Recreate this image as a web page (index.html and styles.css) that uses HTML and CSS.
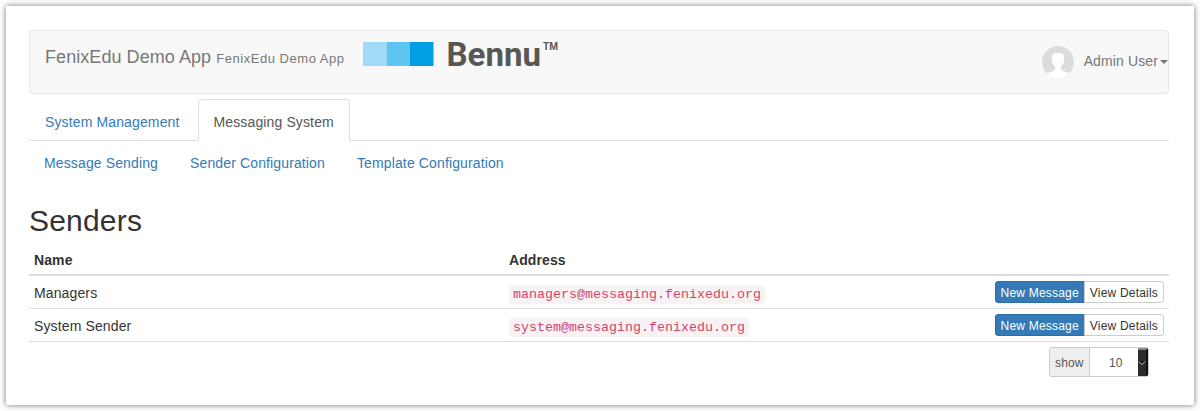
FILE: index.html
```html
<!DOCTYPE html>
<html lang="en">
<head>
<meta charset="utf-8">
<title>Senders</title>
<link rel="stylesheet" href="styles.css">
</head>
<body>
<main class="window">
  <header class="navbar">
    <div class="brand">FenixEdu Demo App <small>FenixEdu Demo App</small></div>
    <svg class="logo" width="200" height="48" viewBox="0 -6 200 48">
      <rect x="0" y="5" width="23.500" height="24" fill="#a1daf8"/>
      <rect x="23.500" y="5" width="23.500" height="24" fill="#5ec5f2"/>
      <rect x="47" y="5" width="23.500" height="24" fill="#009fe3"/>
      <text class="logo-name" x="83.500" y="29" textLength="94.500" lengthAdjust="spacingAndGlyphs">Bennu</text>
      <text class="logo-mark" x="180" y="12.500" textLength="15" lengthAdjust="spacingAndGlyphs">TM</text>
    </svg>
    <div class="user">
      <svg class="avatar" width="32" height="32" viewBox="0 0 32 32">
        <clipPath id="round"><circle cx="16" cy="16" r="16"/></clipPath>
        <g clip-path="url(#round)">
          <rect width="32" height="32" fill="#dcdcdc"/>
          <path d="M11 8Q13 7 16 7T21 8Q22.500 10 22 13Q22.500 14 21.800 17L20.500 18Q20 20 19 21V23Q20 25 23 26L27 27Q30 29 30 32H2Q2 29 5 27L9 26Q12 25 13 23V21Q12 20 11.500 18L10.200 17Q9.500 14 10 13Q9.500 10 11 8Z" fill="#fff"/>
        </g>
      </svg>
      <span class="user-name">Admin User</span><span class="caret"></span>
    </div>
  </header>
  <nav class="tabs">
    <a class="tab">System Management</a>
    <a class="tab active">Messaging System</a>
  </nav>
  <nav class="pills">
    <a class="pill">Message Sending</a>
    <a class="pill">Sender Configuration</a>
    <a class="pill">Template Configuration</a>
  </nav>
  <h2 class="title">Senders</h2>
  <section class="table">
    <div class="row head"><div>Name</div><div>Address</div><div></div></div>
    <div class="row">
      <div>Managers</div>
      <div><code class="address">managers@messaging.fenixedu.org</code></div>
      <div class="buttons"><a class="btn primary">New Message</a><a class="btn">View Details</a></div>
    </div>
    <div class="row">
      <div>System Sender</div>
      <div><code class="address">system@messaging.fenixedu.org</code></div>
      <div class="buttons"><a class="btn primary">New Message</a><a class="btn">View Details</a></div>
    </div>
  </section>
  <div class="pager">
    <span class="addon">show</span>
    <span class="value">10</span>
    <span class="arrow"><svg width="8" height="6" viewBox="0 0 8 6"><path d="M1 1.500L4 4.500L7 1.500" fill="#000" stroke="#ddd"/></svg></span>
  </div>
</main>
</body>
</html>
```
FILE: styles.css
```css
* { box-sizing: border-box; }
body {
  margin: 0;
  padding: 6px;
  height: 411px;
  overflow: hidden;
  background: #fff;
  font: 14px/20px "Liberation Sans", Arial, sans-serif;
  letter-spacing: .13px;
  color: #333;
}
.window {
  height: 399px;
  padding: 24px 25px 0 23px;
  background: #fff;
  box-shadow: 0 0 6px rgba(0, 0, 0, .55);
}
.navbar {
  display: flex;
  align-items: flex-start;
  height: 64px;
  padding: 0 0 0 15px;
  background: #f8f8f8;
  border: 1px solid #e7e7e7;
  border-radius: 4px;
  color: #777;
}
.brand {
  width: 318px;
  padding-top: 16px;
  font-size: 18px;
  letter-spacing: .06px;
  white-space: nowrap;
}
.brand small { font-size: 13px; letter-spacing: .54px; }
.logo { letter-spacing: 0; }
.logo-name { font: bold 33.700px Roboto, sans-serif; fill: #575756; }
.logo-mark { font: bold 11px Roboto, sans-serif; fill: #575756; }
.user {
  display: flex;
  align-items: center;
  margin-left: auto;
  padding-top: 15px;
}
.avatar { margin-right: 10px; }
.user-name { position: relative; top: -1px; letter-spacing: .12px; }
.caret {
  margin-left: 2px;
  border-top: 4px solid #777;
  border-left: 4px solid transparent;
  border-right: 4px solid transparent;
}
.tabs {
  display: flex;
  gap: 2px;
  height: 42px;
  margin-top: 5px;
  border-bottom: 1px solid #ddd;
}
.tab {
  height: 42px;
  padding: 12px 15px 0;
  border: 1px solid transparent;
  color: #337ab7;
}
.tab.active {
  background: #fff;
  border-color: #ddd #ddd #fff;
  border-radius: 4px 4px 0 0;
  color: #555;
}
.pills { display: flex; gap: 2px; margin-top: 2px; }
.pill { padding: 10px 15px; color: #337ab7; }
.title {
  margin: 21px 0 8px;
  font-size: 30px;
  line-height: 33px;
  font-weight: 400;
  letter-spacing: .2px;
}
.row {
  display: grid;
  grid-template-columns: 475px 396px 1fr;
  height: 33px;
  padding-top: 7px;
  border-bottom: 1px solid #ddd;
}
.row > div { padding: 0 5px; }
.row.head {
  height: 31px;
  padding-top: 5px;
  border-bottom-width: 2px;
  font-weight: 700;
  letter-spacing: .1px;
}
.address {
  display: inline-block;
  padding: 2px 4px;
  border-radius: 4px;
  background: #f9f2f4;
  color: #d2456a;
  font: 13.300px/15px "Liberation Mono", monospace;
  letter-spacing: .02px;
}
.row > .buttons {
  display: flex;
  justify-content: flex-end;
  margin-top: -2px;
}
.btn {
  height: 22px;
  padding: 2px 5px;
  border: 1px solid #ccc;
  border-radius: 0 3px 3px 0;
  font-size: 12px;
  line-height: 18px;
  letter-spacing: .2px;
  white-space: nowrap;
}
.btn.primary {
  margin-right: -1px;
  background: #337ab7;
  border-color: #2e6da4;
  border-radius: 3px 0 0 3px;
  color: #fff;
}
.pager {
  display: flex;
  width: 100px;
  height: 30px;
  margin: 5px 20px 0 auto;
  border: 1px solid #ccc;
  border-radius: 3px;
  overflow: hidden;
  color: #555;
  font-size: 12px;
  line-height: 30px;
}
.addon {
  width: 40px;
  padding-left: 5px;
  background: #eee;
  border-right: 1px solid #ccc;
}
.value { flex: 1; padding-left: 19px; }
.arrow {
  display: flex;
  align-items: center;
  width: 10px;
  background: #2b2b2b;
  border-top: 2px solid #888;
  border-right: 2px solid #111;
}
```
